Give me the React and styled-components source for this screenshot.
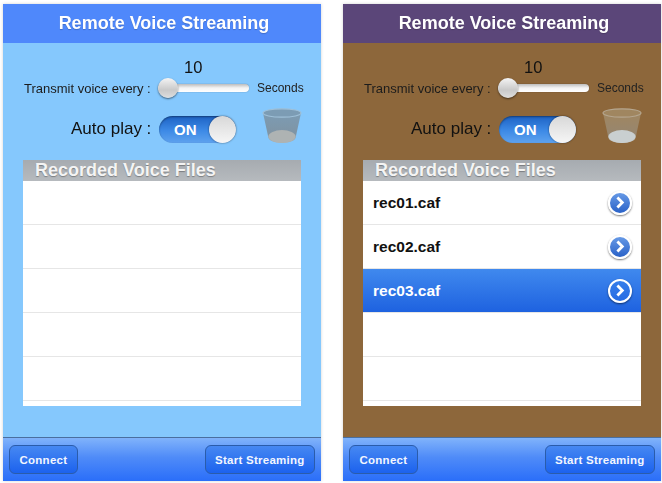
import styled, { createGlobalStyle } from "styled-components";

const GlobalStyle = createGlobalStyle`
  html, body {
    margin: 0;
    padding: 0;
    background: #fff;
    font-family: "Liberation Sans", Arial, sans-serif;
  }
`;

const ROWS_LEFT = [{}, {}, {}, {}, {}, {}];
const ROWS_RIGHT = [
  { name: "rec01.caf" },
  { name: "rec02.caf" },
  { name: "rec03.caf", selected: true },
  {},
  {},
  {},
];

function Chevron({ selected }) {
  return (
    <DisclosureButton $selected={selected}>
      <svg width="10" height="13" viewBox="0 0 10 13">
        <path
          d="M2.4 1.6 L7.3 6.5 L2.4 11.4"
          fill="none"
          stroke="#fff"
          strokeWidth="2.8"
        />
      </svg>
    </DisclosureButton>
  );
}

function Trash({ brown }) {
  const id = brown ? "cupB" : "cupA";
  const edge = brown ? "#b5a68f" : "#9fc0d8";
  const top = brown ? "#a08660" : "#7c9cb4";
  const low = brown ? "#97866f" : "#7f94a4";
  const floor = brown ? "#c9cfd0" : "#aeb3b3";
  return (
    <TrashIcon width="40" height="37" viewBox="0 0 40 37">
      <defs>
        <linearGradient id={id} x1="0" y1="0" x2="0" y2="1">
          <stop offset="0" stopColor={top} />
          <stop offset="0.7" stopColor={low} />
          <stop offset="1" stopColor={floor} />
        </linearGradient>
      </defs>
      <path d="M1 6 L6.5 31 C9 37.5 31 37.5 33.5 31 L39 6 Z" fill={`url(#${id})`} />
      <ellipse cx="20" cy="29.5" rx="13.5" ry="6.5" fill={floor} />
      <ellipse cx="20" cy="6" rx="19" ry="4.2" fill={top} stroke={edge} strokeWidth="1.2" />
    </TrashIcon>
  );
}

function Phone({ bg, bar, brown, rows }) {
  return (
    <Screen $bg={bg}>
      <TitleBar $bar={bar}>Remote Voice Streaming</TitleBar>
      <Content>
        <SliderValue>10</SliderValue>
        <TransmitRow>
          <TransmitLabel>Transmit voice every :</TransmitLabel>
          <SliderTrack>
            <SliderThumb />
          </SliderTrack>
          <SecondsLabel>Seconds</SecondsLabel>
        </TransmitRow>
        <AutoPlayRow>
          <AutoPlayLabel>Auto play :</AutoPlayLabel>
          <Toggle>
            ON
            <ToggleKnob />
          </Toggle>
          <Trash brown={brown} />
        </AutoPlayRow>
        <FileList>
          <ListHeader>Recorded Voice Files</ListHeader>
          {rows.map((row, i) => (
            <FileRow key={i} $selected={row.selected}>
              {row.name && <span>{row.name}</span>}
              {row.name && <Chevron selected={row.selected} />}
            </FileRow>
          ))}
        </FileList>
      </Content>
      <BottomBar>
        <BarButton>Connect</BarButton>
        <BarButton>Start Streaming</BarButton>
      </BottomBar>
    </Screen>
  );
}

export default function App() {
  return (
    <>
      <GlobalStyle />
      <Page>
        <Phone bg="#85c8fd" bar="#4f88fb" rows={ROWS_LEFT} />
        <Phone bg="#8d673b" bar="#5b4679" rows={ROWS_RIGHT} brown />
      </Page>
    </>
  );
}

const Page = styled.div`
  width: 662px;
  height: 483px;
  box-sizing: border-box;
  padding: 4px 0 2px 3px;
  display: flex;
  gap: 22px;
  overflow: hidden;
  background: #fff;
`;

const Screen = styled.div`
  width: 318px;
  flex: none;
  display: flex;
  flex-direction: column;
  background: ${(props) => props.$bg};
  box-shadow: 0 0 3px rgba(0, 0, 0, 0.18);
  filter: blur(0.3px);
`;

const TitleBar = styled.div`
  height: 39px;
  flex: none;
  box-sizing: border-box;
  padding-left: 4px;
  display: flex;
  align-items: center;
  justify-content: center;
  background: ${(props) => props.$bar};
  color: #fff;
  font-size: 18px;
  font-weight: bold;
  text-shadow: 0 1px 1px rgba(0, 0, 0, 0.2);
`;

const Content = styled.div`
  flex: 1;
  display: flex;
  flex-direction: column;
`;

const SliderValue = styled.div`
  margin: 15px 0 0 181px;
  height: 18px;
  line-height: 18px;
  font-size: 16.5px;
  color: #111;
`;

const TransmitRow = styled.div`
  display: flex;
  align-items: center;
  height: 24px;
  padding-left: 21px;
`;

const TransmitLabel = styled.span`
  width: 134px;
  font-size: 13px;
  color: #1c1c1c;
  white-space: nowrap;
`;

const SliderTrack = styled.div`
  position: relative;
  width: 91px;
  height: 8px;
  border-radius: 4px;
  background: linear-gradient(#bdbdbd, #f4f4f4 50%, #fff);
  box-shadow: 0 0 1px rgba(0, 0, 0, 0.5);
`;

const SliderThumb = styled.div`
  position: absolute;
  left: 0;
  top: -6px;
  width: 20px;
  height: 20px;
  border-radius: 50%;
  background: linear-gradient(#f4f4f4, #c9c9c9 60%, #dedede);
  box-shadow: 0 1px 2px rgba(0, 0, 0, 0.55);
`;

const SecondsLabel = styled.span`
  margin-left: 8px;
  font-size: 12px;
  color: #222;
`;

const AutoPlayRow = styled.div`
  display: flex;
  align-items: center;
  height: 42px;
  margin-top: 8px;
  padding-left: 68px;
`;

const AutoPlayLabel = styled.span`
  width: 88px;
  font-size: 17px;
  color: #111;
  white-space: nowrap;
`;

const Toggle = styled.div`
  position: relative;
  width: 77px;
  height: 27px;
  box-sizing: border-box;
  padding-left: 15px;
  border-radius: 14px;
  background: linear-gradient(#1d62c4, #3d8ae6 55%, #5ea2ee);
  box-shadow: inset 0 1px 2px rgba(0, 0, 0, 0.4);
  color: #fff;
  font-size: 15px;
  font-weight: bold;
  line-height: 27px;
`;

const ToggleKnob = styled.div`
  position: absolute;
  right: 0;
  top: 0;
  width: 27px;
  height: 27px;
  border-radius: 50%;
  background: linear-gradient(#d8d8d8, #f6f6f6);
  box-shadow: 0 0 2px rgba(0, 0, 0, 0.6);
`;

const TrashIcon = styled.svg`
  margin: -8px 0 0 26px;
  flex: none;
`;

const FileList = styled.div`
  width: 278px;
  height: 246px;
  margin: 10px 0 0 20px;
  background: #fff;
  overflow: hidden;
`;

const ListHeader = styled.div`
  height: 21px;
  box-sizing: border-box;
  padding-left: 12px;
  background: linear-gradient(#a6abb0, #b6babe);
  color: #f4f4f4;
  font-size: 18px;
  font-weight: bold;
  line-height: 21px;
  white-space: nowrap;
  text-shadow: 0 1px 1px rgba(0, 0, 0, 0.3);
`;

const FileRow = styled.div`
  height: 44px;
  box-sizing: border-box;
  display: flex;
  align-items: center;
  justify-content: space-between;
  padding: 0 9px 0 10px;
  border-bottom: 1px solid #e6e6e6;
  background: ${(props) =>
    props.$selected ? "linear-gradient(#4089ee, #1e62e0)" : "#fff"};
  color: ${(props) => (props.$selected ? "#fff" : "#111")};
  font-size: 15.5px;
  font-weight: bold;
`;

const DisclosureButton = styled.div`
  width: 24px;
  height: 24px;
  box-sizing: border-box;
  display: flex;
  align-items: center;
  justify-content: center;
  border: 2px solid #fff;
  border-radius: 50%;
  background: ${(props) =>
    props.$selected ? "transparent" : "linear-gradient(#6699e6, #2a62c8)"};
  box-shadow: 0 1px 2px rgba(0, 0, 0, 0.55);
`;

const BottomBar = styled.div`
  height: 44px;
  flex: none;
  box-sizing: border-box;
  display: flex;
  align-items: center;
  justify-content: space-between;
  padding: 0 6px;
  border-top: 1px solid #4a6f9f;
  background: linear-gradient(#80b3fb, #4f8bf8 45%, #2a6ef9);
`;

const BarButton = styled.div`
  height: 29px;
  box-sizing: border-box;
  padding: 0 9.5px;
  display: flex;
  align-items: center;
  border: 1px solid #2a5cab;
  border-radius: 6px;
  background: linear-gradient(#4688f2, #1c62ee);
  color: #f2f6ff;
  font-size: 11.5px;
  font-weight: bold;
  letter-spacing: 0.25px;
`;
